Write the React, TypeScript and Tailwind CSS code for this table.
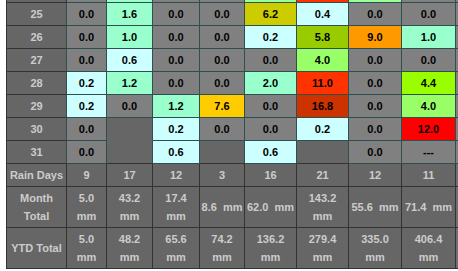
import React from 'react';

type K = 'g' | 'd' | 'c' | 'm' | 'l' | 'n' | 'o' | 'y' | 'a' | 'p' | 'r' | 'x' | 'b' | 'e';

const BG: Record<K, string> = {
  g: 'bg-[#808080]',
  d: 'bg-[#666666]',
  c: 'bg-[#ccffff]',
  m: 'bg-[#99ffcc]',
  l: 'bg-[#99ff66]',
  n: 'bg-[#99ff00]',
  o: 'bg-[#99cc00]',
  y: 'bg-[#cccc00]',
  a: 'bg-[#ffcc00]',
  p: 'bg-[#ff9900]',
  r: 'bg-[#ff3300]',
  x: 'bg-[#ff0000]',
  b: 'bg-[#cc3300]',
  e: 'bg-[#666666]',
};

type D = [string, K];

const rows: { day: string; cells: D[] }[] = [
  { day: '25', cells: [['0.0', 'g'], ['1.6', 'm'], ['0.0', 'g'], ['0.0', 'g'], ['6.2', 'y'], ['0.4', 'c'], ['0.0', 'g'], ['0.0', 'g']] },
  { day: '26', cells: [['0.0', 'g'], ['1.0', 'm'], ['0.0', 'g'], ['0.0', 'g'], ['0.2', 'c'], ['5.8', 'o'], ['9.0', 'p'], ['1.0', 'm']] },
  { day: '27', cells: [['0.0', 'g'], ['0.6', 'c'], ['0.0', 'g'], ['0.0', 'g'], ['0.0', 'g'], ['4.0', 'l'], ['0.0', 'g'], ['0.0', 'g']] },
  { day: '28', cells: [['0.2', 'c'], ['1.2', 'm'], ['0.0', 'g'], ['0.0', 'g'], ['2.0', 'm'], ['11.0', 'r'], ['0.0', 'g'], ['4.4', 'n']] },
  { day: '29', cells: [['0.2', 'c'], ['0.0', 'g'], ['1.2', 'm'], ['7.6', 'a'], ['0.0', 'g'], ['16.8', 'b'], ['0.0', 'g'], ['4.0', 'l']] },
  { day: '30', cells: [['0.0', 'g'], ['', 'e'], ['0.2', 'c'], ['0.0', 'g'], ['0.0', 'g'], ['0.2', 'c'], ['0.0', 'g'], ['12.0', 'x']] },
  { day: '31', cells: [['0.0', 'g'], ['', 'e'], ['0.6', 'c'], ['', 'e'], ['0.6', 'c'], ['', 'e'], ['0.0', 'g'], ['---', 'g']] },
];

const sliver: string[] = [
  'bg-[#666666]',
  'bg-[#808080]',
  'bg-[#99ffcc]',
  'bg-[#808080]',
  'bg-[#808080]',
  'bg-[#99ff99]',
  'bg-[#ff3300]',
  'bg-[#99ff99]',
  'bg-[#808080]',
  'bg-[#808080]',
];

const rainDays = ['9', '17', '12', '3', '16', '21', '12', '11'];
const month: string[][] = [
  ['5.0', 'mm'],
  ['43.2', 'mm'],
  ['17.4', 'mm'],
  ['8.6\u00a0\u00a0mm'],
  ['62.0\u00a0\u00a0mm'],
  ['143.2', 'mm'],
  ['55.6\u00a0\u00a0mm'],
  ['71.4\u00a0\u00a0mm'],
];
const ytd: string[][] = [
  ['5.0', 'mm'],
  ['48.2', 'mm'],
  ['65.6', 'mm'],
  ['74.2', 'mm'],
  ['136.2', 'mm'],
  ['279.4', 'mm'],
  ['335.0', 'mm'],
  ['406.4', 'mm'],
];

const LABEL =
  'bg-[#666666] text-[#cccccc] border-r border-b border-r-[#333333] border-b-[#333333] flex flex-col items-center justify-center whitespace-nowrap';

function SumRow({ label, vals, tall }: { label: string[]; vals: string[][]; tall: boolean }) {
  const h = tall ? 'h-[41px]' : 'h-[23px]';
  return (
    <>
      <div className={`${LABEL} ${h}`}>
        {label.map((s, i) => (
          <span key={i}>{s}</span>
        ))}
      </div>
      {vals.map((v, i) => (
        <div key={i} className={`${LABEL} ${h}`}>
          {v.map((s, j) => (
            <span key={j}>{s}</span>
          ))}
        </div>
      ))}
      <div className={`${h} bg-[#6e6e6e] border-b border-b-[#333333]`} />
    </>
  );
}

export default function App() {
  return (
    <div className="w-[458px] h-[271px] overflow-hidden bg-white pl-[6px]">
      <div className="grid w-max grid-cols-[60px_40px_46px_47px_45px_52px_52px_53px_54px_40px] border-l border-l-[#333333] font-['Liberation_Sans',Arial,sans-serif] text-[11px] leading-[18px] font-bold">
        {sliver.map((c, i) => (
          <div
            key={i}
            className={`h-[3px] ${c} border-b border-r ${i === 0 ? 'border-b-[#333333] border-r-[#333333]' : 'border-b-[#2f4f4f] border-r-[#2f4f4f]'}`}
          />
        ))}
        {rows.map((r, ri) => (
          <React.Fragment key={r.day}>
            <div className="h-[23px] bg-[#666666] text-[#cccccc] border-r border-b border-r-[#2f4f4f] border-b-[#333333] flex items-center justify-center">
              {r.day}
            </div>
            {r.cells.map(([t, k], ci) => {
              const empty = k === 'e';
              const nextEmpty = ri + 1 < rows.length && rows[ri + 1].cells[ci][1] === 'e';
              const bottom = empty
                ? nextEmpty
                  ? 'border-b-[#666666]'
                  : ri === rows.length - 1
                  ? 'border-b-[#333333]'
                  : 'border-b-[#2f4f4f]'
                : 'border-b-[#2f4f4f]';
              return (
                <div
                  key={ci}
                  className={`h-[23px] ${BG[k]} text-black border-r border-b border-r-[#2f4f4f] ${bottom} flex items-center justify-center`}
                >
                  {t}
                </div>
              );
            })}
            <div className="h-[23px] bg-[#808080] border-b border-b-[#2f4f4f]" />
          </React.Fragment>
        ))}
        <SumRow label={['Rain Days']} vals={rainDays.map((v) => [v])} tall={false} />
        <SumRow label={['Month', 'Total']} vals={month} tall />
        <SumRow label={['YTD Total']} vals={ytd} tall />
      </div>
    </div>
  );
}
